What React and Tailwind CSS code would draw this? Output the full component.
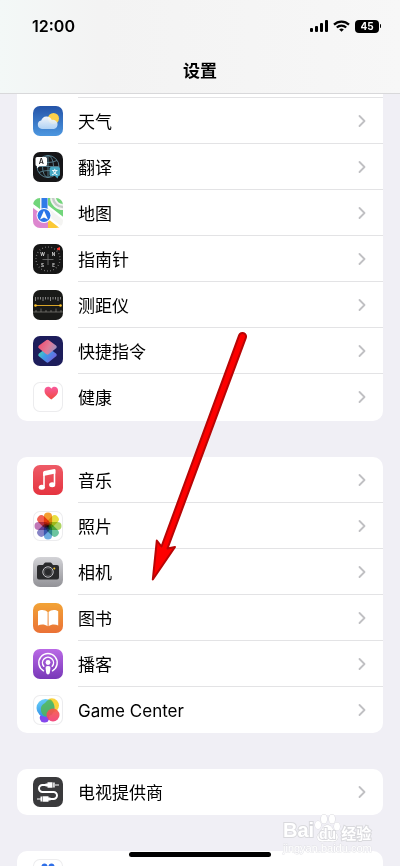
import { clsx } from "clsx";
import { ChevronRight } from "lucide-react";

const WeatherIcon = () => (
  <svg viewBox="0 0 30 30" className="size-full">
    <defs>
      <linearGradient id="sky" x1="0" y1="0" x2="0" y2="1">
        <stop offset="0" stopColor="#2453a8" />
        <stop offset="1" stopColor="#4c97e0" />
      </linearGradient>
      <linearGradient id="cloud" x1="0" y1="0" x2="0" y2="1">
        <stop offset="0" stopColor="#ffffff" />
        <stop offset="1" stopColor="#b9d8f7" />
      </linearGradient>
    </defs>
    <rect width="30" height="30" fill="url(#sky)" />
    <circle cx="20.5" cy="12.5" r="5.5" fill="#fcd04b" />
    <path
      d="M9 23a4.3 4.3 0 0 1-.8-8.5 5.6 5.6 0 0 1 10.6-.6 4.6 4.6 0 0 1 2.2 9.1z"
      fill="url(#cloud)"
      fillOpacity="0.93"
    />
  </svg>
);

const TranslateIcon = () => (
  <svg viewBox="0 0 30 30" className="size-full">
    <rect width="30" height="30" fill="#161618" />
    <g fill="none" stroke="#5b8797" strokeWidth="0.9">
      <circle cx="15" cy="14.5" r="11" />
      <ellipse cx="15" cy="14.5" rx="5.5" ry="11" />
      <path d="M15 3.5v22M4 14.5h22M6 8.500q9 4 18 0M6 20.500q9-4 18 0" />
    </g>
    <path d="M4 5h8.500q1.500 0 1.500 1.500v6q0 1.500-1.500 1.500H6.500L4 16.500V14q-1.500 0-1.500-1.500v-6Q2.500 5 4 5z" fill="#fff" />
    <path d="M18 15h7.500q1.500 0 1.500 1.500v6q0 1.500-1.500 1.500l-1 2.500L22 24h-4q-1.500 0-1.500-1.500v-6q0-1.500 1.500-1.500z" fill="#47a9c4" />
    <text x="8.2" y="12.2" fontSize="7" fontWeight="600" textAnchor="middle" fontFamily="Inter, sans-serif" fill="#222">A</text>
    <text x="21.8" y="22" fontSize="6" fontWeight="700" textAnchor="middle" fontFamily="'Noto Sans CJK SC', sans-serif" fill="#fff">文</text>
  </svg>
);

const MapsIcon = () => (
  <svg viewBox="0 0 30 30" className="size-full">
    <rect width="30" height="30" fill="#f4f4f2" />
    <path d="M0 0h7v11L0 6z" fill="#72d57b" />
    <path d="M15 0h15v21L15 10z" fill="#72d57b" />
    <path d="M0 10l15 11v9H0z" fill="#dd86cf" />
    <path d="M15 20l13 10H15z" fill="#fbc935" />
    <path d="M20 0a10 10 0 0 0 10 9" fill="none" stroke="#f4f4f2" strokeWidth="6" />
    <path d="M20 0a10 10 0 0 0 10 9" fill="none" stroke="#c5ccc8" strokeWidth="2.5" />
    <path d="M-1 7l31 24M14 8l17 13" stroke="#fff" strokeWidth="2.5" />
    <path d="M8.500 0h6v14h-6z" fill="#2f7be8" />
    <circle cx="11" cy="17.5" r="7.5" fill="#fff" />
    <circle cx="11" cy="17.5" r="6.5" fill="#2b75e8" />
    <path d="M11 12.500l4 9-4-2-4 2z" fill="#fff" />
  </svg>
);

const CompassIcon = () => (
  <svg viewBox="0 0 30 30" className="size-full">
    <rect width="30" height="30" fill="#161616" />
    <circle cx="15" cy="15" r="12" fill="none" stroke="#8a8a8a" strokeWidth="1.3" strokeDasharray="0.7 2.44" />
    <path d="M15 10v11M9.500 15.500h11" stroke="#777" strokeWidth="0.8" />
    <g fontSize="4.500" fontWeight="700" textAnchor="middle" fontFamily="Inter, sans-serif" fill="#d5d5d5">
      <text x="9.5" y="11.5">W</text>
      <text x="20.5" y="11.5">N</text>
      <text x="9.5" y="22.5">S</text>
      <text x="20.5" y="22.5">E</text>
    </g>
    <path d="M26.500 3.500v2.500L24 5z" fill="#ff3b30" stroke="#ff3b30" strokeLinejoin="round" />
  </svg>
);

const MeasureIcon = () => (
  <svg viewBox="0 0 30 30" className="size-full">
    <rect width="30" height="30" fill="#191a18" />
    <path
      d="M2.500 7v4M5 7v2.500M7.500 7v2.500M10 7v4M12.500 7v2.500M15 7v2.500M17.500 7v4M20 7v2.500M22.500 7v2.500M25 7v4M27.500 7v2.500"
      stroke="#a5a5a5"
      strokeWidth="0.8"
    />
    <path d="M0 22h30M3 22v-2M8 22v-3.500M13 22v-2M18 22v-2M23 22v-3.500M28 22v-2" stroke="#85857f" strokeWidth="0.7" />
    <path d="M3 15.500h24" stroke="#d8a528" />
    <circle cx="2.5" cy="15.5" r="1.3" fill="#ffc52d" />
    <circle cx="27.5" cy="15.5" r="1.3" fill="#ffc52d" />
  </svg>
);

const ShortcutsIcon = () => (
  <svg viewBox="0 0 30 30" className="size-full">
    <defs>
      <linearGradient id="lower" x1="0" y1="0" x2="1" y2="0.6">
        <stop offset="0" stopColor="#45d5b8" />
        <stop offset="0.5" stopColor="#3e9ae8" />
        <stop offset="1" stopColor="#6b6ae0" />
      </linearGradient>
      <linearGradient id="upper" x1="0" y1="0.3" x2="1" y2="0.7">
        <stop offset="0" stopColor="#ed5577" />
        <stop offset="0.55" stopColor="#df7b98" />
        <stop offset="1" stopColor="#a28ebb" />
      </linearGradient>
    </defs>
    <rect width="30" height="30" fill="#1d1d5b" />
    <path d="M14.500 13.500l7.500 5.500-7.500 6-7.500-6z" fill="url(#lower)" stroke="url(#lower)" strokeWidth="3.5" strokeLinejoin="round" />
    <path d="M14.500 5.500l7.500 5.500-7.500 6-7.500-6z" fill="url(#upper)" stroke="url(#upper)" strokeWidth="3.5" strokeLinejoin="round" />
  </svg>
);

const HealthIcon = () => (
  <svg viewBox="0 0 30 30" className="size-full">
    <defs>
      <linearGradient id="heart" x1="0" y1="0" x2="0" y2="1">
        <stop offset="0" stopColor="#f85a9c" />
        <stop offset="1" stopColor="#f04b3e" />
      </linearGradient>
    </defs>
    <path
      d="M18.300 17.500C13.500 14 11.500 11.700 11.500 8.700c0-4.200 5-5.200 6.800-1.900 1.800-3.300 6.800-2.300 6.800 1.900 0 3-2 5.300-6.800 8.800z"
      fill="url(#heart)"
    />
  </svg>
);

const MusicIcon = () => (
  <svg viewBox="0 0 30 30" className="size-full">
    <defs>
      <linearGradient id="music" x1="0" y1="0" x2="0" y2="1">
        <stop offset="0" stopColor="#ee5b67" />
        <stop offset="1" stopColor="#e5333f" />
      </linearGradient>
    </defs>
    <rect width="30" height="30" fill="url(#music)" />
    <path d="M11 21.500V8l10.500-2.300v13.300" fill="none" stroke="#fff" strokeWidth="1.6" />
    <path d="M10.200 7.200q0-1 1-1.200l10-2q1.200-.2 1.200 1v3.500l-12.200 2.500z" fill="#fff" />
    <ellipse cx="8.8" cy="22.2" rx="3.1" ry="2.5" fill="#fff" />
    <ellipse cx="19.2" cy="19.8" rx="3.1" ry="2.5" fill="#fff" />
  </svg>
);

const petals = ["#f3931b", "#e6d92b", "#a5cf51", "#5cbf95", "#5da3dd", "#7a77c0", "#b868ae", "#ee4f40"];

const PhotosIcon = () => (
  <svg viewBox="0 0 30 30" className="size-full">
    {petals.map((color, i) => (
      <rect
        key={color}
        x="10.9"
        y="1.5"
        width="8.2"
        height="14"
        rx="4.1"
        fill={color}
        fillOpacity="0.9"
        transform={`rotate(${i * 45} 15 15)`}
        className="mix-blend-multiply"
      />
    ))}
  </svg>
);

const CameraIcon = () => (
  <svg viewBox="0 0 30 30" className="size-full">
    <defs>
      <linearGradient id="steel" x1="0" y1="0" x2="0" y2="1">
        <stop offset="0" stopColor="#d3d3d7" />
        <stop offset="1" stopColor="#929297" />
      </linearGradient>
    </defs>
    <rect width="30" height="30" fill="url(#steel)" />
    <path
      d="M6 8h4l1.500-2q.4-.5 1-.5h5q.6 0 1 .5L20 8h4q2 0 2 2v10.500q0 2-2 2H6q-2 0-2-2V10q0-2 2-2z"
      fill="#292a2c"
    />
    <circle cx="15" cy="15" r="5.2" fill="none" stroke="#c4c4c8" />
    <circle cx="15" cy="15" r="3.8" fill="none" stroke="#5a5a5e" strokeWidth="0.8" />
    <circle cx="21.3" cy="11.5" r="1" fill="#f8c92c" />
  </svg>
);

const BooksIcon = () => (
  <svg viewBox="0 0 30 30" className="size-full">
    <defs>
      <linearGradient id="books" x1="0" y1="0" x2="0" y2="1">
        <stop offset="0" stopColor="#f2a336" />
        <stop offset="1" stopColor="#ea7136" />
      </linearGradient>
    </defs>
    <rect width="30" height="30" fill="url(#books)" />
    <path d="M14.600 9C12.500 6.500 7.500 6.300 5 8.300v14.200c2.800-1.500 7-1.400 9.600.7z" fill="#fff" />
    <path d="M15.600 9c2.100-2.500 7.100-2.700 9.600-.7v14.200c-2.800-1.500-7-1.400-9.600.7z" fill="#fff" />
  </svg>
);

const PodcastsIcon = () => (
  <svg viewBox="0 0 30 30" className="size-full">
    <defs>
      <linearGradient id="podcasts" x1="0" y1="0" x2="0" y2="1">
        <stop offset="0" stopColor="#ba69e6" />
        <stop offset="1" stopColor="#7838b8" />
      </linearGradient>
    </defs>
    <rect width="30" height="30" fill="url(#podcasts)" />
    <g fill="none" stroke="#fff" strokeWidth="1.5" strokeLinecap="round">
      <path d="M10.500 21.800a9.200 9.200 0 1 1 9 0" />
      <path d="M10.800 17.300a5.500 5.500 0 1 1 8.400 0" />
    </g>
    <circle cx="15" cy="13.5" r="2.4" fill="#fff" />
    <path d="M15 17c2 0 2.600.8 2.400 2.500l-.6 4.300q-.3 1.800-1.800 1.800t-1.800-1.800l-.6-4.300C12.400 17.800 13 17 15 17z" fill="#fff" />
  </svg>
);

const GameCenterIcon = () => (
  <svg viewBox="0 0 30 30" className="size-full">
    <defs>
      <linearGradient id="bubbleBlue" x1="0" y1="0" x2="0.3" y2="1">
        <stop offset="0" stopColor="#6bd5f8" />
        <stop offset="1" stopColor="#318ee8" />
      </linearGradient>
      <linearGradient id="bubbleRed" x1="0" y1="0" x2="0" y2="1">
        <stop offset="0" stopColor="#f55b43" />
        <stop offset="1" stopColor="#f23d78" />
      </linearGradient>
    </defs>
    <circle cx="11.5" cy="22.8" r="4.8" fill="#8547ec" />
    <circle cx="18.8" cy="10.5" r="7.2" fill="#fad23c" />
    <circle cx="12.5" cy="13" r="9" fill="url(#bubbleBlue)" />
    <path d="M21.300 11.400A9 9 0 0 1 14.700 21.700 7.200 7.200 0 0 1 12 8a7.200 7.200 0 0 1 5.500-3.400 9 9 0 0 1 3.800 6.800z" fill="#55b84b" fillOpacity="0.8" />
    <circle cx="20" cy="20" r="6.5" fill="url(#bubbleRed)" fillOpacity="0.92" />
  </svg>
);

const TvProviderIcon = () => (
  <svg viewBox="0 0 30 30" className="size-full">
    <rect width="30" height="30" fill="#3a3a3c" />
    <path
      d="M14 8H9.500a3.500 3.500 0 0 0 0 7h11a3.500 3.500 0 0 1 0 7H16"
      fill="none"
      stroke="#fff"
      strokeWidth="2"
    />
    <path d="M12.500 6.500h2V5.200h5v5.600h-5V9.500h-2zM20.200 5.500h1.500v5h-1.500zM17.500 20.500h-2v-1.300h-6v5.600h6v-1.300h2zM7.500 19.500H9v5H7.500z" fill="#fff" />
    <path d="M22 8h4M4 22h4" stroke="#fff" />
  </svg>
);

const PeopleIcon = () => (
  <svg viewBox="0 0 30 30" className="size-full">
    <g fill="#2f6fe8">
      <circle cx="11.5" cy="7.5" r="3" />
      <circle cx="18.5" cy="7.5" r="3" />
      <path d="M5 22q0-9 6.500-9t6.500 9zM19 22q0-5-2-8 8-3 8 8z" />
    </g>
  </svg>
);

const groups = [
  [
    { label: "天气", Icon: WeatherIcon },
    { label: "翻译", Icon: TranslateIcon },
    { label: "地图", Icon: MapsIcon },
    { label: "指南针", Icon: CompassIcon },
    { label: "测距仪", Icon: MeasureIcon },
    { label: "快捷指令", Icon: ShortcutsIcon },
    { label: "健康", Icon: HealthIcon, outlined: true },
  ],
  [
    { label: "音乐", Icon: MusicIcon },
    { label: "照片", Icon: PhotosIcon, outlined: true },
    { label: "相机", Icon: CameraIcon },
    { label: "图书", Icon: BooksIcon },
    { label: "播客", Icon: PodcastsIcon },
    { label: "Game Center", Icon: GameCenterIcon, outlined: true },
  ],
  [{ label: "电视提供商", Icon: TvProviderIcon }],
  [{ label: "", Icon: PeopleIcon, outlined: true }],
];

function SettingsRow({ label, Icon, outlined = false, last }) {
  return (
    <li>
      <a href="#" className="flex h-[46px] items-center gap-[15px] pl-4">
        <span
          className={clsx(
            "size-[30px] shrink-0 overflow-hidden rounded-[7px]",
            outlined && "bg-white ring-1 ring-[#ececee] ring-inset",
          )}
        >
          <Icon />
        </span>
        <span
          className={clsx(
            "flex h-full flex-1 items-center justify-between border-b pr-[11px] text-[17px]",
            last ? "border-transparent" : "border-[#e3e3e5]",
          )}
        >
          <span className="pt-1">{label}</span>
          <ChevronRight className="size-5 text-[#c0c0c3]" strokeWidth={2.2} />
        </span>
      </a>
    </li>
  );
}

function StatusBar() {
  return (
    <div className="flex h-[52px] items-center justify-between pr-[19px] pl-8">
      <span className="font-[Inter] text-base font-semibold">12:00</span>
      <div className="flex items-center gap-[5px]">
        <svg viewBox="0 0 18 12" className="h-3 w-[18px]">
          <rect x="0" y="8" width="3" height="4" rx="1" />
          <rect x="5" y="6" width="3" height="6" rx="1" />
          <rect x="10" y="3" width="3" height="9" rx="1" />
          <rect x="15" y="0" width="3" height="12" rx="1" />
        </svg>
        <svg viewBox="0 0 17 12" className="h-3 w-[17px]" fill="none" stroke="#000" strokeWidth="2.2">
          <path d="M1 4.600a10.800 10.800 0 0 1 15 0M3.800 7.500a6.800 6.800 0 0 1 9.400 0" />
          <path d="M8.500 11.800L6.200 9.500a3.300 3.300 0 0 1 4.600 0z" fill="#000" stroke="none" />
        </svg>
        <div className="flex items-center gap-px">
          <span className="flex h-[13px] w-6 items-center justify-center rounded bg-black font-[Inter] text-[10px] font-bold text-white">
            45
          </span>
          <span className="h-1 w-px rounded-r bg-black" />
        </div>
      </div>
    </div>
  );
}

function Watermark() {
  return (
    <div className="pointer-events-none absolute right-[27px] bottom-3 flex w-[90px] flex-col font-['Liberation_Sans','Noto_Sans_CJK_SC',sans-serif] text-white">
      <div className="flex items-end leading-5 font-bold [paint-order:stroke] [-webkit-text-stroke:2px_#d9d9dd]">
        <span className="text-xl">Bai</span>
        <span className="relative flex h-[30px] w-[27px] shrink-0 items-end justify-center">
          <svg
            viewBox="0 0 27 30"
            className="absolute inset-0 size-full"
            fill="#fff"
            stroke="#d9d9dd"
          >
            <ellipse cx="4" cy="11" rx="3" ry="4" />
            <ellipse cx="10" cy="5" rx="3" ry="4.5" />
            <ellipse cx="18" cy="5" rx="3" ry="4.5" />
            <ellipse cx="23" cy="12.5" rx="3" ry="4" />
            <path d="M13.500 11c4 0 5 4.500 8 7.500 5 5 1 9.500-3 9-3-.4-7-.4-10 0-4 .5-8-4-3-9 3-3 4-7.500 8-7.500z" />
          </svg>
          <span className="relative text-sm">du</span>
        </span>
        <span className="text-[15px]">经验</span>
      </div>
      <span className="-mt-0.5 text-[11px] leading-3 [paint-order:stroke] [-webkit-text-stroke:1px_#e4e4e8]">
        jingyan.baidu.com
      </span>
    </div>
  );
}

export default function App() {
  return (
    <div className="relative flex h-screen flex-col overflow-hidden bg-[#f0eff5] font-[Inter,'Noto_Sans_CJK_SC',sans-serif] text-black">
      <header className="shrink-0 border-b border-[#d8d8da] bg-linear-to-r from-[#f3f8f7] via-[#f3f3f3] via-25% to-[#f7f7f7]">
        <StatusBar />
        <h1 className="h-[41px] text-center text-[17px] leading-[38px] font-bold">设置</h1>
      </header>

      <main className="min-h-0 flex-1 overflow-hidden px-[17px]">
        <div className="flex flex-col gap-9">
          {groups.map((rows, i) => (
            <ul
              key={i}
              className={clsx("bg-white", i === 0 ? "rounded-b-[10px] pb-px" : "rounded-[10px]")}
            >
              {i === 0 && <li className="ml-[61px] h-1 border-b border-[#e3e3e5]" />}
              {rows.map((row, j) => (
                <SettingsRow key={row.label} {...row} last={j === rows.length - 1} />
              ))}
            </ul>
          ))}
        </div>
      </main>

      <svg
        viewBox="0 0 100 254"
        className="pointer-events-none absolute top-[330px] left-[148px] h-[254px] w-[100px]"
      >
        <path
          d="M91.200 5.200a3.400 3.400 0 0 1 6.600 2.600L19.500 218.500l7.500-1.500L4.800 249.500 8.800 210.500l4.700 6z"
          fill="#fe0000"
          stroke="#b80505"
          strokeWidth="2"
          strokeLinejoin="round"
        />
      </svg>

      <Watermark />
      <div className="absolute bottom-[9px] left-1/2 h-[5px] w-[142px] -translate-x-1/2 rounded-full bg-black" />
    </div>
  );
}
